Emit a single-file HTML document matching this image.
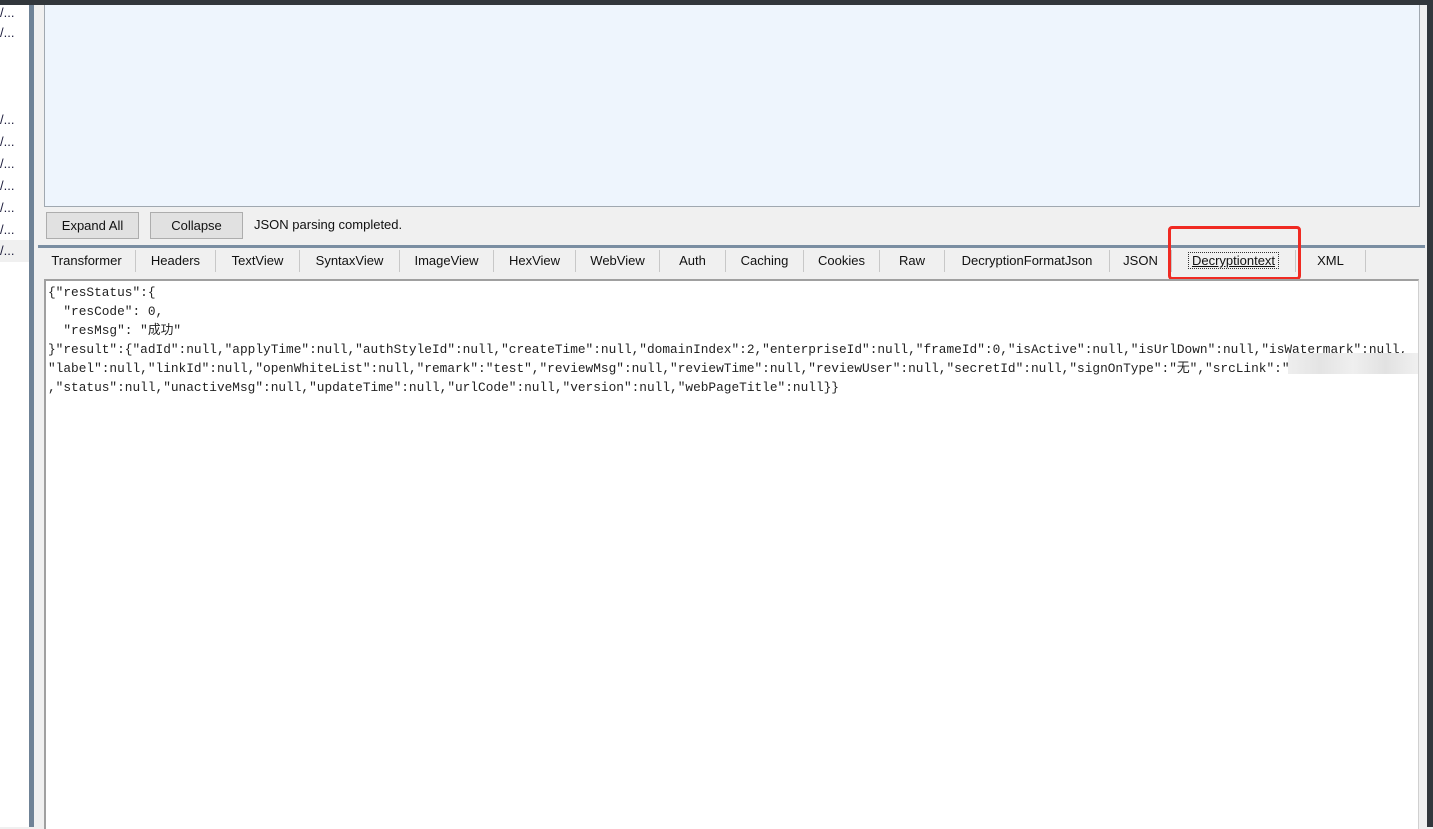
<!DOCTYPE html>
<html><head><meta charset="utf-8"><style>
body{margin:0;width:1433px;height:827px;overflow:hidden;background:#f0f0f0;position:relative;font-family:"Liberation Sans","Noto Sans CJK SC",sans-serif;}
.a{position:absolute}
.lt{position:absolute;left:0;font-size:13px;color:#1a1a3a;line-height:20px}
.btn{position:absolute;top:212px;height:25px;border:1px solid #adadad;background:#e1e1e1;font-size:13px;line-height:25px;text-align:center;color:#111}
.tab{position:absolute;top:250px;height:22px;font-size:13px;line-height:22px;text-align:center;color:#111;border-right:1px solid #c8c8c8}
.mono{position:absolute;left:48px;font-family:"Liberation Mono","Noto Sans CJK SC",monospace;font-size:12.8px;color:#222;white-space:pre;line-height:19px;letter-spacing:0}
</style></head><body>
<div class="a" style="left:0;top:0;width:1433px;height:5px;background:#32373c"></div>
<div class="a" style="left:0;top:5px;width:29px;height:822px;background:#fff"></div>
<div class="a" style="left:0;top:240px;width:29px;height:22px;background:#f0f0f0"></div>
<div class="lt" style="top:3px">/...</div>
<div class="lt" style="top:23px">/...</div>
<div class="lt" style="top:110px">/...</div>
<div class="lt" style="top:132px">/...</div>
<div class="lt" style="top:154px">/...</div>
<div class="lt" style="top:176px">/...</div>
<div class="lt" style="top:198px">/...</div>
<div class="lt" style="top:220px">/...</div>
<div class="lt" style="top:241px">/...</div>
<div class="a" style="left:29px;top:5px;width:5px;height:822px;background:#6f8296"></div>
<div class="a" style="left:1427px;top:0;width:6px;height:827px;background:#32373c"></div>
<div class="a" style="left:44px;top:5px;width:1374px;height:201px;background:#eef5fd;border:1px solid #a0a8b0;border-top:none"></div>
<div class="btn" style="left:46px;width:91px">Expand All</div>
<div class="btn" style="left:150px;width:91px">Collapse</div>
<div class="a" style="left:254px;top:212px;font-size:13px;line-height:25px;color:#111">JSON parsing completed.</div>
<div class="a" style="left:38px;top:245px;width:1387px;height:3px;background:#7a8ea2"></div>
<div class="tab" style="left:38px;width:97px">Transformer</div>
<div class="tab" style="left:136px;width:79px">Headers</div>
<div class="tab" style="left:216px;width:83px">TextView</div>
<div class="tab" style="left:300px;width:99px">SyntaxView</div>
<div class="tab" style="left:400px;width:93px">ImageView</div>
<div class="tab" style="left:494px;width:81px">HexView</div>
<div class="tab" style="left:576px;width:83px">WebView</div>
<div class="tab" style="left:660px;width:65px">Auth</div>
<div class="tab" style="left:726px;width:77px">Caching</div>
<div class="tab" style="left:804px;width:75px">Cookies</div>
<div class="tab" style="left:880px;width:64px">Raw</div>
<div class="tab" style="left:945px;width:164px">DecryptionFormatJson</div>
<div class="tab" style="left:1110px;width:61px">JSON</div>
<div class="tab" style="left:1172px;width:123px"><span style="border:1px dotted #333;padding:0 3px;text-decoration:underline">Decryptiontext</span></div>
<div class="tab" style="left:1296px;width:69px">XML</div>
<div class="a" style="left:1168px;top:226px;width:127px;height:48px;border:3px solid #f02a22;border-radius:4px"></div>
<div class="a" style="left:44px;top:279px;width:1372px;height:548px;background:#fff;border-top:2px solid #a0a0a0;border-left:2px solid #a0a0a0;border-right:1px solid #d0d0d0"></div>
<div class="mono" style="top:283px">{"resStatus":{
  "resCode": 0,
  "resMsg": "成功"
}"result":{"adId":null,"applyTime":null,"authStyleId":null,"createTime":null,"domainIndex":2,"enterpriseId":null,"frameId":0,"isActive":null,"isUrlDown":null,"isWatermark":null,
"label":null,"linkId":null,"openWhiteList":null,"remark":"test","reviewMsg":null,"reviewTime":null,"reviewUser":null,"secretId":null,"signOnType":"无","srcLink":"
,"status":null,"unactiveMsg":null,"updateTime":null,"urlCode":null,"version":null,"webPageTitle":null}}</div>
<div class="a" style="left:1288px;top:353px;width:130px;height:21px;background:linear-gradient(90deg,#eee,#e4e4e4,#efefef,#e2e2e2,#f0f0f0)"></div>
</body></html>
